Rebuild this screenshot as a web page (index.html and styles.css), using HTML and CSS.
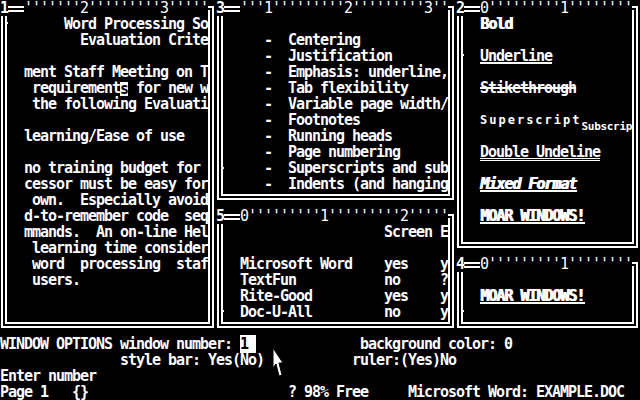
FILE: index.html
```html
<!DOCTYPE html>
<html>
<head>
<meta charset="utf-8">
<link rel="stylesheet" href="styles.css">
</head>
<body>
<div class="screen">
  <div class="windows">
    <div class="win w1">
      <div class="ruler"><span class="num">1</span><span class="dbl"></span><span class="ticks">'''''''2'''''''''3'''''</span><span class="corner"></span></div>
      <div class="frame">
        <span class="thumb"></span>
        <div class="l">       Word Processing So</div>
        <div class="l">         Evaluation Crite</div>
        <div class="l"></div>
        <div class="l">  ment Staff Meeting on T</div>
        <div class="l">   requirement<span class="cur">s</span> for new w</div>
        <div class="l">   the following Evaluati</div>
        <div class="l"></div>
        <div class="l">  learning/Ease of use</div>
        <div class="l"></div>
        <div class="l">  no training budget for</div>
        <div class="l">  cessor must be easy for</div>
        <div class="l">   own.  Especially avoid</div>
        <div class="l">  d-to-remember code  seq</div>
        <div class="l">  mmands.  An on-line Hel</div>
        <div class="l">   learning time consider</div>
        <div class="l">   word  processing  staf</div>
        <div class="l">   users.</div>
      </div>
    </div>
    <div class="col mid">
      <div class="win w3">
        <div class="ruler"><span class="num">3</span><span class="dbl"></span><span class="ticks">'''1'''''''''2'''''''''3''</span><span class="corner"></span></div>
        <div class="frame">
          <span class="thumb"></span>
          <div class="l"></div>
          <div class="l">     -  Centering</div>
          <div class="l">     -  Justification</div>
          <div class="l">     -  Emphasis: underline,</div>
          <div class="l">     -  Tab flexibility</div>
          <div class="l">     -  Variable page width/</div>
          <div class="l">     -  Footnotes</div>
          <div class="l">     -  Running heads</div>
          <div class="l">     -  Page numbering</div>
          <div class="l">     -  Superscripts and sub</div>
          <div class="l">     -  Indents (and hanging</div>
        </div>
      </div>
      <div class="win w5">
        <div class="ruler"><span class="num">5</span><span class="dbl"></span><span class="ticks">0'''''''''1'''''''''2'''''</span><span class="corner"></span></div>
        <div class="frame">
          <span class="thumb"></span>
          <div class="l">                    Screen E</div>
          <div class="l"></div>
          <div class="l">  Microsoft Word    yes    y</div>
          <div class="l">  TextFun           no     ?</div>
          <div class="l">  Rite-Good         yes    y</div>
          <div class="l">  Doc-U-All         no     y</div>
        </div>
      </div>
    </div>
    <div class="col right">
      <div class="win w2">
        <div class="ruler"><span class="num">2</span><span class="dbl"></span><span class="ticks">0'''''''''1''''''''</span><span class="corner"></span></div>
        <div class="frame">
          <span class="thumb"></span>
          <div class="l">  <span class="bold">Bold</span></div>
          <div class="l"></div>
          <div class="l">  <span class="ul">Underline</span></div>
          <div class="l"></div>
          <div class="l">  <span class="strike">Stikethrough</span></div>
          <div class="l"></div>
          <div class="l">  <span class="sup">Superscript</span><span class="sub">Subscrip</span></div>
          <div class="l"></div>
          <div class="l">  <span class="dul">Double Undeline</span></div>
          <div class="l"></div>
          <div class="l">  <span class="mixed">Mixed Format</span></div>
          <div class="l"></div>
          <div class="l">  <span class="moar">MOAR WINDOWS!</span></div>
        </div>
      </div>
      <div class="win w4">
        <div class="ruler"><span class="num">4</span><span class="dbl"></span><span class="ticks">0'''''''''1''''''''</span><span class="corner"></span></div>
        <div class="frame">
          <span class="thumb"></span>
          <div class="l"></div>
          <div class="l">  <span class="moar">MOAR WINDOWS!</span></div>
        </div>
      </div>
    </div>
  </div>
  <div class="status">
    <div class="l">WINDOW OPTIONS window number: <span class="field">1</span>             background color: 0</div>
    <div class="l">               style bar: Yes(No)           ruler:(Yes)No</div>
    <div class="l">Enter number</div>
    <div class="l">Page 1   {}                         ? 98% Free     Microsoft Word: EXAMPLE.DOC</div>
  </div>
  <svg class="pointer" width="12" height="31" viewBox="0 0 12 31"><path d="M1 1 L1 21 L4 17 L7 29 L10 28 L7 16 L11 16 Z" fill="#fff" stroke="#000" stroke-width="1"/></svg>
</div>
</body>
</html>
```

FILE: styles.css
```css
html, body {
  margin: 0;
  padding: 0;
  background: #000;
}

body {
  width: 640px;
  height: 400px;
  overflow: hidden;
}

.screen {
  position: relative;
  width: 640px;
  height: 400px;
  background: #000;
  color: #fff;
  font-family: "DejaVu Sans Mono", monospace;
  font-size: 15px;
  font-weight: bold;
  letter-spacing: -1.03px;
  line-height: 16px;
  font-kerning: none;
  font-variant-ligatures: none;
}

.windows {
  display: flex;
  height: 336px;
}

.col {
  display: flex;
  flex-direction: column;
}

.mid { width: 240px; }
.right { width: 184px; }

.win {
  display: flex;
  flex-direction: column;
}

.w1 { width: 216px; height: 336px; }
.w3 { height: 208px; }
.w5 { height: 128px; }
.w2 { height: 256px; }
.w4 { height: 80px; }

.ruler {
  display: flex;
  height: 16px;
}

.num {
  width: 8px;
}

.dbl {
  width: 16px;
  height: 6px;
  margin-top: 6px;
  box-sizing: border-box;
  border-top: 2px solid #fff;
  border-bottom: 2px solid #fff;
}

.ticks {
  flex: 1;
  font-weight: normal;
  white-space: pre;
}

.corner {
  width: 6px;
  height: 10px;
  margin-top: 6px;
  margin-right: 2px;
  box-sizing: border-box;
  border-top: 6px double #fff;
  border-right: 6px double #fff;
}

.frame {
  flex: 1;
  position: relative;
  margin: 0 2px 8px 1px;
  border: 6px double #fff;
  border-top: 0;
  padding-left: 1px;
  overflow: hidden;
}

.thumb {
  position: absolute;
  left: -7px;
  width: 8px;
  height: 2px;
  background: #fff;
}

.w1 .thumb { top: 6px; }
.w2 .thumb { top: 38px; }
.w3 .thumb { top: 151px; }
.w5 .thumb { top: 86px; }
.w4 .thumb { top: 38px; }

.l {
  height: 16px;
  white-space: pre;
}

.cur {
  display: inline-block;
  height: 14px;
  line-height: 14px;
  margin-top: 2px;
  vertical-align: top;
  background: #fff;
  color: #000;
}

.bold {
  text-shadow: 1px 0 0 #fff;
}

.ul {
  text-decoration: underline;
  text-decoration-thickness: 2px;
  text-underline-offset: 1px;
}

.strike {
  text-decoration: line-through;
  text-decoration-thickness: 2px;
}

.sup {
  font-size: 12px;
  letter-spacing: 2px;
  vertical-align: 3px;
}

.sub {
  font-size: 11px;
  letter-spacing: -0.3px;
  vertical-align: -3px;
}

.dul {
  text-decoration: underline double;
  text-decoration-thickness: 1px;
  text-underline-offset: 1px;
}

.mixed {
  font-style: italic;
  text-shadow: 1px 0 0 #fff;
  text-decoration: underline;
  text-decoration-thickness: 2px;
  text-underline-offset: 1px;
}

.moar {
  text-shadow: 1px 0 0 #fff;
  text-decoration: underline;
  text-decoration-thickness: 2px;
  text-underline-offset: 1px;
}

.field {
  background: #fff;
  color: #000;
  padding-right: 8px;
}

.pointer {
  position: absolute;
  left: 272px;
  top: 347px;
}
```
